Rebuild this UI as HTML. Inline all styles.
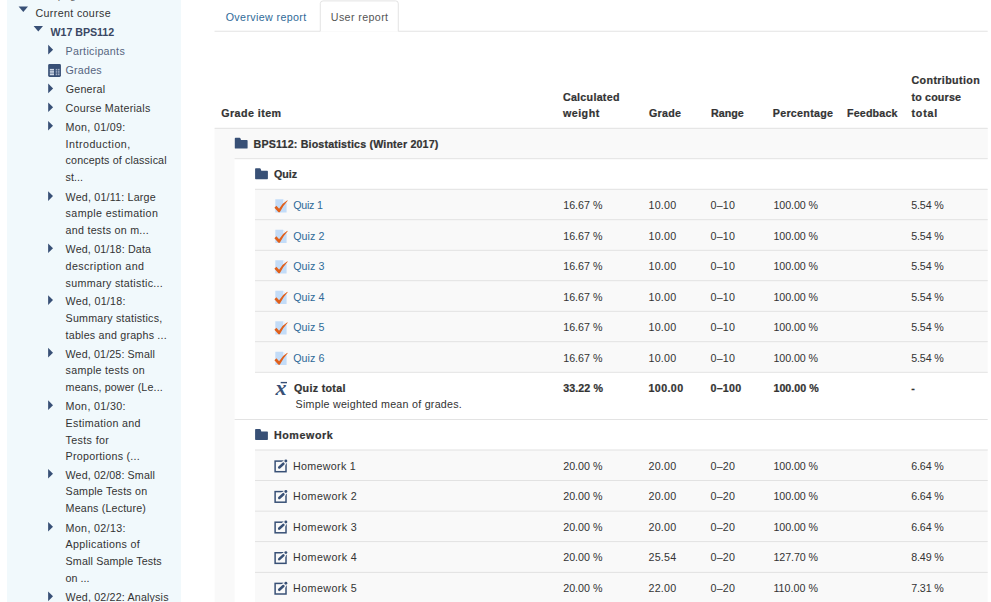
<!DOCTYPE html>
<html><head><meta charset="utf-8"><title>User report</title>
<style>
html,body{margin:0;padding:0;}
html{overflow:hidden;width:991px;height:602px;}
body{width:991px;height:602px;overflow:hidden;background:#fff;position:relative;
font-family:"Liberation Sans",sans-serif;font-size:10.7px;line-height:16.46px;color:#333;}
.abs{position:absolute;}
.side{position:absolute;left:6.5px;top:0;width:174.5px;height:602px;background:#f1f9fc;}
.t{position:absolute;white-space:nowrap;}
.b{font-weight:bold;-webkit-text-stroke:0.22px currentColor;}
.lnk{color:#2f6a98;}
svg{position:absolute;overflow:visible;}
</style></head>
<body>
<div class="side"></div>
<svg style="left:0;top:0" width="991" height="602" viewBox="0 0 991 602"><path d="M18.6 6.6h9.4l-4.7 5.4Z" fill="#385076"/><path d="M33.6 26.1h9.4l-4.7 5.4Z" fill="#385076"/><path d="M48.2 44.8l4.9 4.85l-4.9 4.85Z" fill="#385076"/><rect x="48.15" y="64" width="12.8" height="12.95" rx="1.4" fill="#385076"/><rect x="49.8" y="68.9" width="4.2" height="1.3" fill="#ced8e6"/><rect x="55.7" y="68.9" width="1.6" height="1.3" fill="#9fadc4"/><rect x="57.95" y="68.9" width="1.6" height="1.3" fill="#9fadc4"/><rect x="49.8" y="70.58" width="4.2" height="1.3" fill="#ced8e6"/><rect x="55.7" y="70.58" width="1.6" height="1.3" fill="#9fadc4"/><rect x="57.95" y="70.58" width="1.6" height="1.3" fill="#9fadc4"/><rect x="49.8" y="72.26" width="4.2" height="1.3" fill="#ced8e6"/><rect x="55.7" y="72.26" width="1.6" height="1.3" fill="#9fadc4"/><rect x="57.95" y="72.26" width="1.6" height="1.3" fill="#9fadc4"/><rect x="49.8" y="73.94" width="4.2" height="1.3" fill="#ced8e6"/><rect x="55.7" y="73.94" width="1.6" height="1.3" fill="#9fadc4"/><rect x="57.95" y="73.94" width="1.6" height="1.3" fill="#9fadc4"/><path d="M48.2 83.6l4.9 4.85l-4.9 4.85Z" fill="#385076"/><path d="M48.2 102.4l4.9 4.85l-4.9 4.85Z" fill="#385076"/><path d="M48.1 120.9l4.9 4.85l-4.9 4.85Z" fill="#385076"/><path d="M48.1 191.2l4.9 4.85l-4.9 4.85Z" fill="#385076"/><path d="M48.1 243.4l4.9 4.85l-4.9 4.85Z" fill="#385076"/><path d="M48.1 295.2l4.9 4.85l-4.9 4.85Z" fill="#385076"/><path d="M48.1 347.8l4.9 4.85l-4.9 4.85Z" fill="#385076"/><path d="M48.1 400.3l4.9 4.85l-4.9 4.85Z" fill="#385076"/><path d="M48.1 468.9l4.9 4.85l-4.9 4.85Z" fill="#385076"/><path d="M48.1 521.9l4.9 4.85l-4.9 4.85Z" fill="#385076"/><path d="M48.1 591.5l4.9 4.85l-4.9 4.85Z" fill="#385076"/><rect x="214.5" y="30.8" width="773.2" height="0.82" fill="#ddd"/><path d="M320.3 31.7V3.6Q320.3 0.9 323 0.9H395.6Q398.3 0.9 398.3 3.6V31.7Z" fill="#fff"/><path d="M320.3 31.2V3.6Q320.3 0.9 323 0.9H395.6Q398.3 0.9 398.3 3.6V31.2" fill="none" stroke="#ddd" stroke-width="0.82"/><rect x="214.6" y="128.25" width="773.1" height="480" fill="#f9f9f9"/><rect x="234.6" y="158.75" width="753.1" height="460" fill="#fff"/><rect x="214.6" y="127.84" width="773.1" height="31.5" fill="#f9f9f9"/><rect x="214.6" y="127.84" width="773.1" height="0.82" fill="#ddd"/><rect x="234.6" y="158.34" width="753.1" height="31.5" fill="#fff"/><rect x="234.6" y="158.34" width="753.1" height="0.82" fill="#ddd"/><rect x="255" y="188.84" width="732.7" height="31.5" fill="#f9f9f9"/><rect x="255" y="188.84" width="732.7" height="0.82" fill="#ddd"/><rect x="255" y="219.34" width="732.7" height="31.5" fill="#f9f9f9"/><rect x="255" y="219.34" width="732.7" height="0.82" fill="#ddd"/><rect x="255" y="249.84" width="732.7" height="31.5" fill="#f9f9f9"/><rect x="255" y="249.84" width="732.7" height="0.82" fill="#ddd"/><rect x="255" y="280.34" width="732.7" height="31.5" fill="#f9f9f9"/><rect x="255" y="280.34" width="732.7" height="0.82" fill="#ddd"/><rect x="255" y="310.84" width="732.7" height="31.5" fill="#f9f9f9"/><rect x="255" y="310.84" width="732.7" height="0.82" fill="#ddd"/><rect x="255" y="341.34" width="732.7" height="31.5" fill="#f9f9f9"/><rect x="255" y="341.34" width="732.7" height="0.82" fill="#ddd"/><rect x="255" y="371.84" width="732.7" height="48.15" fill="#fff"/><rect x="255" y="371.84" width="732.7" height="0.82" fill="#ddd"/><rect x="234.6" y="418.99" width="753.1" height="31.6" fill="#fff"/><rect x="234.6" y="418.99" width="753.1" height="0.82" fill="#ddd"/><rect x="255" y="449.59" width="732.7" height="31.5" fill="#f9f9f9"/><rect x="255" y="449.59" width="732.7" height="0.82" fill="#ddd"/><rect x="255" y="480.09" width="732.7" height="31.6" fill="#f9f9f9"/><rect x="255" y="480.09" width="732.7" height="0.82" fill="#ddd"/><rect x="255" y="510.69" width="732.7" height="31.55" fill="#f9f9f9"/><rect x="255" y="510.69" width="732.7" height="0.82" fill="#ddd"/><rect x="255" y="541.24" width="732.7" height="31.65" fill="#f9f9f9"/><rect x="255" y="541.24" width="732.7" height="0.82" fill="#ddd"/><rect x="255" y="571.89" width="732.7" height="31.5" fill="#f9f9f9"/><rect x="255" y="571.89" width="732.7" height="0.82" fill="#ddd"/><path transform="translate(234.8 137.7)" d="M0.7 0H4.8Q5.4 0 5.6 0.6L6.2 2.4H12.1Q12.8 2.4 12.8 3.1V10.2Q12.8 10.9 12.1 10.9H0.7Q0 10.9 0 10.2V0.7Q0 0 0.7 0Z" fill="#385076"/><path transform="translate(255.1 168.3)" d="M0.7 0H4.8Q5.4 0 5.6 0.6L6.2 2.4H12.1Q12.8 2.4 12.8 3.1V10.2Q12.8 10.9 12.1 10.9H0.7Q0 10.9 0 10.2V0.7Q0 0 0.7 0Z" fill="#385076"/><g transform="translate(274.3 199.35)"><path d="M1 0H8.7L12.3 3.6V13.1H1Z" fill="#c3dcf8"/><path d="M8.7 0L12.3 3.6H8.7Z" fill="#e6f0fc"/><path d="M0.1 8.35L2.1 6.5L4.8 9.35Q7.8 3.9 13.05 0.9L13.35 1.35Q9.1 5.7 5.5 13L4.2 13Z" fill="#e0601c"/></g><g transform="translate(274.3 229.85)"><path d="M1 0H8.7L12.3 3.6V13.1H1Z" fill="#c3dcf8"/><path d="M8.7 0L12.3 3.6H8.7Z" fill="#e6f0fc"/><path d="M0.1 8.35L2.1 6.5L4.8 9.35Q7.8 3.9 13.05 0.9L13.35 1.35Q9.1 5.7 5.5 13L4.2 13Z" fill="#e0601c"/></g><g transform="translate(274.3 260.35)"><path d="M1 0H8.7L12.3 3.6V13.1H1Z" fill="#c3dcf8"/><path d="M8.7 0L12.3 3.6H8.7Z" fill="#e6f0fc"/><path d="M0.1 8.35L2.1 6.5L4.8 9.35Q7.8 3.9 13.05 0.9L13.35 1.35Q9.1 5.7 5.5 13L4.2 13Z" fill="#e0601c"/></g><g transform="translate(274.3 290.85)"><path d="M1 0H8.7L12.3 3.6V13.1H1Z" fill="#c3dcf8"/><path d="M8.7 0L12.3 3.6H8.7Z" fill="#e6f0fc"/><path d="M0.1 8.35L2.1 6.5L4.8 9.35Q7.8 3.9 13.05 0.9L13.35 1.35Q9.1 5.7 5.5 13L4.2 13Z" fill="#e0601c"/></g><g transform="translate(274.3 321.35)"><path d="M1 0H8.7L12.3 3.6V13.1H1Z" fill="#c3dcf8"/><path d="M8.7 0L12.3 3.6H8.7Z" fill="#e6f0fc"/><path d="M0.1 8.35L2.1 6.5L4.8 9.35Q7.8 3.9 13.05 0.9L13.35 1.35Q9.1 5.7 5.5 13L4.2 13Z" fill="#e0601c"/></g><g transform="translate(274.3 351.85)"><path d="M1 0H8.7L12.3 3.6V13.1H1Z" fill="#c3dcf8"/><path d="M8.7 0L12.3 3.6H8.7Z" fill="#e6f0fc"/><path d="M0.1 8.35L2.1 6.5L4.8 9.35Q7.8 3.9 13.05 0.9L13.35 1.35Q9.1 5.7 5.5 13L4.2 13Z" fill="#e0601c"/></g><rect x="280.7" y="381.9" width="6.3" height="1.4" fill="#385076"/><path transform="translate(255.1 429.0)" d="M0.7 0H4.8Q5.4 0 5.6 0.6L6.2 2.4H12.1Q12.8 2.4 12.8 3.1V10.2Q12.8 10.9 12.1 10.9H0.7Q0 10.9 0 10.2V0.7Q0 0 0.7 0Z" fill="#385076"/><g transform="translate(274.36 458.85)"><rect x="0.75" y="2.25" width="10.9" height="10.6" fill="none" stroke="#385076" stroke-width="1.5"/><path d="M4.9 8.6L9.1 4.8" stroke="#f9f9f9" stroke-width="5" stroke-linecap="round"/><circle cx="11.5" cy="2.1" r="2.5" fill="#f9f9f9"/><path d="M4.9 8.6L9.0 4.9" stroke="#385076" stroke-width="2.6" stroke-linecap="round"/><circle cx="11.5" cy="2.1" r="1.45" fill="#385076"/></g><g transform="translate(274.36 489.35)"><rect x="0.75" y="2.25" width="10.9" height="10.6" fill="none" stroke="#385076" stroke-width="1.5"/><path d="M4.9 8.6L9.1 4.8" stroke="#f9f9f9" stroke-width="5" stroke-linecap="round"/><circle cx="11.5" cy="2.1" r="2.5" fill="#f9f9f9"/><path d="M4.9 8.6L9.0 4.9" stroke="#385076" stroke-width="2.6" stroke-linecap="round"/><circle cx="11.5" cy="2.1" r="1.45" fill="#385076"/></g><g transform="translate(274.36 519.95)"><rect x="0.75" y="2.25" width="10.9" height="10.6" fill="none" stroke="#385076" stroke-width="1.5"/><path d="M4.9 8.6L9.1 4.8" stroke="#f9f9f9" stroke-width="5" stroke-linecap="round"/><circle cx="11.5" cy="2.1" r="2.5" fill="#f9f9f9"/><path d="M4.9 8.6L9.0 4.9" stroke="#385076" stroke-width="2.6" stroke-linecap="round"/><circle cx="11.5" cy="2.1" r="1.45" fill="#385076"/></g><g transform="translate(274.36 550.5)"><rect x="0.75" y="2.25" width="10.9" height="10.6" fill="none" stroke="#385076" stroke-width="1.5"/><path d="M4.9 8.6L9.1 4.8" stroke="#f9f9f9" stroke-width="5" stroke-linecap="round"/><circle cx="11.5" cy="2.1" r="2.5" fill="#f9f9f9"/><path d="M4.9 8.6L9.0 4.9" stroke="#385076" stroke-width="2.6" stroke-linecap="round"/><circle cx="11.5" cy="2.1" r="1.45" fill="#385076"/></g><g transform="translate(274.36 581.15)"><rect x="0.75" y="2.25" width="10.9" height="10.6" fill="none" stroke="#385076" stroke-width="1.5"/><path d="M4.9 8.6L9.1 4.8" stroke="#f9f9f9" stroke-width="5" stroke-linecap="round"/><circle cx="11.5" cy="2.1" r="2.5" fill="#f9f9f9"/><path d="M4.9 8.6L9.0 4.9" stroke="#385076" stroke-width="2.6" stroke-linecap="round"/><circle cx="11.5" cy="2.1" r="1.45" fill="#385076"/></g></svg>
<div class="t " style="left:35.5px;top:-12.94px;letter-spacing:0.16px;color:#666;">Site pages</div>
<div class="t " style="left:35.5px;top:5.06px;letter-spacing:0.348px;">Current course</div>
<div class="t b" style="left:50.6px;top:24.06px;letter-spacing:-0.073px;color:#3a4763;-webkit-text-stroke:0;">W17 BPS112</div>
<div class="t " style="left:65.6px;top:43.06px;letter-spacing:0.299px;color:#566580;">Participants</div>
<div class="t " style="left:65.6px;top:62.26px;letter-spacing:0.201px;color:#566580;">Grades</div>
<div class="t " style="left:65.7px;top:81.26px;letter-spacing:0.218px;">General</div>
<div class="t " style="left:65.6px;top:100.06px;letter-spacing:0.261px;">Course Materials</div>
<div class="t " style="left:65.6px;top:119.06px;letter-spacing:0.33px;">Mon, 01/09:</div>
<div class="t " style="left:65.6px;top:136.06px;letter-spacing:0.483px;">Introduction,</div>
<div class="t " style="left:65.6px;top:152.06px;letter-spacing:0.149px;">concepts of classical</div>
<div class="t " style="left:65.6px;top:169.06px;letter-spacing:0.043px;">st...</div>
<div class="t " style="left:65.6px;top:189.06px;letter-spacing:0.191px;">Wed, 01/11: Large</div>
<div class="t " style="left:65.6px;top:205.06px;letter-spacing:0.385px;">sample estimation</div>
<div class="t " style="left:65.6px;top:222.06px;letter-spacing:0.261px;">and tests on m...</div>
<div class="t " style="left:65.6px;top:241.06px;letter-spacing:0.164px;">Wed, 01/18: Data</div>
<div class="t " style="left:65.6px;top:258.06px;letter-spacing:0.425px;">description and</div>
<div class="t " style="left:65.6px;top:275.06px;letter-spacing:0.303px;">summary statistic...</div>
<div class="t " style="left:65.6px;top:293.06px;letter-spacing:0.239px;">Wed, 01/18:</div>
<div class="t " style="left:65.6px;top:310.06px;letter-spacing:0.218px;">Summary statistics,</div>
<div class="t " style="left:65.6px;top:327.06px;letter-spacing:0.213px;">tables and graphs ...</div>
<div class="t " style="left:65.6px;top:346.06px;letter-spacing:0.134px;">Wed, 01/25: Small</div>
<div class="t " style="left:65.6px;top:362.06px;letter-spacing:0.296px;">sample tests on</div>
<div class="t " style="left:65.6px;top:379.06px;letter-spacing:0.151px;">means, power (Le...</div>
<div class="t " style="left:65.6px;top:398.06px;letter-spacing:0.34px;">Mon, 01/30:</div>
<div class="t " style="left:65.6px;top:415.06px;letter-spacing:0.325px;">Estimation and</div>
<div class="t " style="left:65.6px;top:432.06px;letter-spacing:0.357px;">Tests for</div>
<div class="t " style="left:65.6px;top:448.06px;letter-spacing:0.274px;">Proportions (...</div>
<div class="t " style="left:65.6px;top:467.06px;letter-spacing:0.134px;">Wed, 02/08: Small</div>
<div class="t " style="left:65.6px;top:483.06px;letter-spacing:0.192px;">Sample Tests on</div>
<div class="t " style="left:65.6px;top:500.06px;letter-spacing:0.172px;">Means (Lecture)</div>
<div class="t " style="left:65.6px;top:520.06px;letter-spacing:0.34px;">Mon, 02/13:</div>
<div class="t " style="left:65.6px;top:536.06px;letter-spacing:0.335px;">Applications of</div>
<div class="t " style="left:65.6px;top:553.06px;letter-spacing:0.142px;">Small Sample Tests</div>
<div class="t " style="left:65.6px;top:570.06px;letter-spacing:0.018px;">on ...</div>
<div class="t " style="left:65.6px;top:589.06px;letter-spacing:0.172px;">Wed, 02/22: Analysis</div>
<div class="t lnk" style="left:225.7px;top:9.06px;letter-spacing:0.368px;">Overview report</div>
<div class="t " style="left:330.8px;top:9.06px;letter-spacing:0.38px;color:#555;">User report</div>
<div class="t b" style="left:221.2px;top:105.46px;letter-spacing:0.455px;">Grade item</div>
<div class="t b" style="left:562.9px;top:89.06px;letter-spacing:0.279px;">Calculated</div>
<div class="t b" style="left:562.9px;top:105.46px;letter-spacing:0.496px;">weight</div>
<div class="t b" style="left:649px;top:105.46px;letter-spacing:0.269px;">Grade</div>
<div class="t b" style="left:710.9px;top:105.46px;letter-spacing:0.053px;">Range</div>
<div class="t b" style="left:772.8px;top:105.46px;letter-spacing:0.281px;">Percentage</div>
<div class="t b" style="left:847px;top:105.46px;letter-spacing:0.16px;">Feedback</div>
<div class="t b" style="left:911.5px;top:72.06px;letter-spacing:0.373px;">Contribution</div>
<div class="t b" style="left:911.5px;top:88.76px;letter-spacing:0.169px;">to course</div>
<div class="t b" style="left:911.5px;top:105.26px;letter-spacing:0.781px;">total</div>
<div class="t b" style="left:253.6px;top:136.26px;letter-spacing:0.162px;">BPS112: Biostatistics (Winter 2017)</div>
<div class="t b" style="left:273.9px;top:166.46px;letter-spacing:0.045px;">Quiz</div>
<div class="t lnk" style="left:293.2px;top:197.06px;letter-spacing:-0.245px;">Quiz 1</div>
<div class="t " style="left:563.2px;top:197.06px;letter-spacing:0.005px;">16.67 %</div>
<div class="t " style="left:648.5px;top:197.06px;letter-spacing:0.224px;">10.00</div>
<div class="t " style="left:710.5px;top:197.06px;letter-spacing:0.231px;">0–10</div>
<div class="t " style="left:773.4px;top:197.06px;letter-spacing:-0.073px;">100.00 %</div>
<div class="t " style="left:911.2px;top:197.06px;letter-spacing:-0.126px;">5.54 %</div>
<div class="t lnk" style="left:293.2px;top:228.06px;letter-spacing:0.055px;">Quiz 2</div>
<div class="t " style="left:563.2px;top:228.06px;letter-spacing:0.005px;">16.67 %</div>
<div class="t " style="left:648.5px;top:228.06px;letter-spacing:0.224px;">10.00</div>
<div class="t " style="left:710.5px;top:228.06px;letter-spacing:0.231px;">0–10</div>
<div class="t " style="left:773.4px;top:228.06px;letter-spacing:-0.073px;">100.00 %</div>
<div class="t " style="left:911.2px;top:228.06px;letter-spacing:-0.126px;">5.54 %</div>
<div class="t lnk" style="left:293.2px;top:258.06px;letter-spacing:0.055px;">Quiz 3</div>
<div class="t " style="left:563.2px;top:258.06px;letter-spacing:0.005px;">16.67 %</div>
<div class="t " style="left:648.5px;top:258.06px;letter-spacing:0.224px;">10.00</div>
<div class="t " style="left:710.5px;top:258.06px;letter-spacing:0.231px;">0–10</div>
<div class="t " style="left:773.4px;top:258.06px;letter-spacing:-0.073px;">100.00 %</div>
<div class="t " style="left:911.2px;top:258.06px;letter-spacing:-0.126px;">5.54 %</div>
<div class="t lnk" style="left:293.2px;top:289.06px;letter-spacing:0.055px;">Quiz 4</div>
<div class="t " style="left:563.2px;top:289.06px;letter-spacing:0.005px;">16.67 %</div>
<div class="t " style="left:648.5px;top:289.06px;letter-spacing:0.224px;">10.00</div>
<div class="t " style="left:710.5px;top:289.06px;letter-spacing:0.231px;">0–10</div>
<div class="t " style="left:773.4px;top:289.06px;letter-spacing:-0.073px;">100.00 %</div>
<div class="t " style="left:911.2px;top:289.06px;letter-spacing:-0.126px;">5.54 %</div>
<div class="t lnk" style="left:293.2px;top:319.06px;letter-spacing:0.055px;">Quiz 5</div>
<div class="t " style="left:563.2px;top:319.06px;letter-spacing:0.005px;">16.67 %</div>
<div class="t " style="left:648.5px;top:319.06px;letter-spacing:0.224px;">10.00</div>
<div class="t " style="left:710.5px;top:319.06px;letter-spacing:0.231px;">0–10</div>
<div class="t " style="left:773.4px;top:319.06px;letter-spacing:-0.073px;">100.00 %</div>
<div class="t " style="left:911.2px;top:319.06px;letter-spacing:-0.126px;">5.54 %</div>
<div class="t lnk" style="left:293.2px;top:350.06px;letter-spacing:0.055px;">Quiz 6</div>
<div class="t " style="left:563.2px;top:350.06px;letter-spacing:0.005px;">16.67 %</div>
<div class="t " style="left:648.5px;top:350.06px;letter-spacing:0.224px;">10.00</div>
<div class="t " style="left:710.5px;top:350.06px;letter-spacing:0.231px;">0–10</div>
<div class="t " style="left:773.4px;top:350.06px;letter-spacing:-0.073px;">100.00 %</div>
<div class="t " style="left:911.2px;top:350.06px;letter-spacing:-0.126px;">5.54 %</div>
<div class="t" style="left:275.6px;top:376.9px;font-family:'Liberation Serif',serif;font-style:italic;font-size:22px;line-height:22px;font-weight:bold;color:#385076;">x</div>
<div class="t b" style="left:294px;top:379.66px;letter-spacing:0.307px;">Quiz total</div>
<div class="t " style="left:295.5px;top:396.26px;letter-spacing:0.257px;">Simple weighted mean of grades.</div>
<div class="t b" style="left:563.2px;top:379.66px;letter-spacing:0.088px;">33.22 %</div>
<div class="t b" style="left:648.5px;top:379.66px;letter-spacing:0.392px;">100.00</div>
<div class="t b" style="left:710.5px;top:379.66px;letter-spacing:0.214px;">0–100</div>
<div class="t b" style="left:773.4px;top:379.66px;letter-spacing:0.042px;">100.00 %</div>
<div class="t b" style="left:911.2px;top:379.66px;letter-spacing:0.33px;">-</div>
<div class="t b" style="left:273.9px;top:427.26px;letter-spacing:0.61px;">Homework</div>
<div class="t " style="left:293.1px;top:458.06px;letter-spacing:0.302px;">Homework 1</div>
<div class="t " style="left:563.2px;top:458.06px;letter-spacing:0.005px;">20.00 %</div>
<div class="t " style="left:648.5px;top:458.06px;letter-spacing:0.224px;">20.00</div>
<div class="t " style="left:710.5px;top:458.06px;letter-spacing:0.231px;">0–20</div>
<div class="t " style="left:773.4px;top:458.06px;letter-spacing:-0.073px;">100.00 %</div>
<div class="t " style="left:911.2px;top:458.06px;letter-spacing:-0.126px;">6.64 %</div>
<div class="t " style="left:293.1px;top:488.06px;letter-spacing:0.413px;">Homework 2</div>
<div class="t " style="left:563.2px;top:488.06px;letter-spacing:0.005px;">20.00 %</div>
<div class="t " style="left:648.5px;top:488.06px;letter-spacing:0.224px;">20.00</div>
<div class="t " style="left:710.5px;top:488.06px;letter-spacing:0.231px;">0–20</div>
<div class="t " style="left:773.4px;top:488.06px;letter-spacing:-0.073px;">100.00 %</div>
<div class="t " style="left:911.2px;top:488.06px;letter-spacing:-0.126px;">6.64 %</div>
<div class="t " style="left:293.1px;top:519.06px;letter-spacing:0.413px;">Homework 3</div>
<div class="t " style="left:563.2px;top:519.06px;letter-spacing:0.005px;">20.00 %</div>
<div class="t " style="left:648.5px;top:519.06px;letter-spacing:0.224px;">20.00</div>
<div class="t " style="left:710.5px;top:519.06px;letter-spacing:0.231px;">0–20</div>
<div class="t " style="left:773.4px;top:519.06px;letter-spacing:-0.073px;">100.00 %</div>
<div class="t " style="left:911.2px;top:519.06px;letter-spacing:-0.126px;">6.64 %</div>
<div class="t " style="left:293.1px;top:549.06px;letter-spacing:0.413px;">Homework 4</div>
<div class="t " style="left:563.2px;top:549.06px;letter-spacing:0.005px;">20.00 %</div>
<div class="t " style="left:648.5px;top:549.06px;letter-spacing:0.224px;">25.54</div>
<div class="t " style="left:710.5px;top:549.06px;letter-spacing:0.231px;">0–20</div>
<div class="t " style="left:773.4px;top:549.06px;letter-spacing:-0.073px;">127.70 %</div>
<div class="t " style="left:911.2px;top:549.06px;letter-spacing:-0.126px;">8.49 %</div>
<div class="t " style="left:293.1px;top:580.06px;letter-spacing:0.413px;">Homework 5</div>
<div class="t " style="left:563.2px;top:580.06px;letter-spacing:0.005px;">20.00 %</div>
<div class="t " style="left:648.5px;top:580.06px;letter-spacing:0.224px;">22.00</div>
<div class="t " style="left:710.5px;top:580.06px;letter-spacing:0.231px;">0–20</div>
<div class="t " style="left:773.4px;top:580.06px;letter-spacing:0.042px;">110.00 %</div>
<div class="t " style="left:911.2px;top:580.06px;letter-spacing:-0.126px;">7.31 %</div>
</body></html>
